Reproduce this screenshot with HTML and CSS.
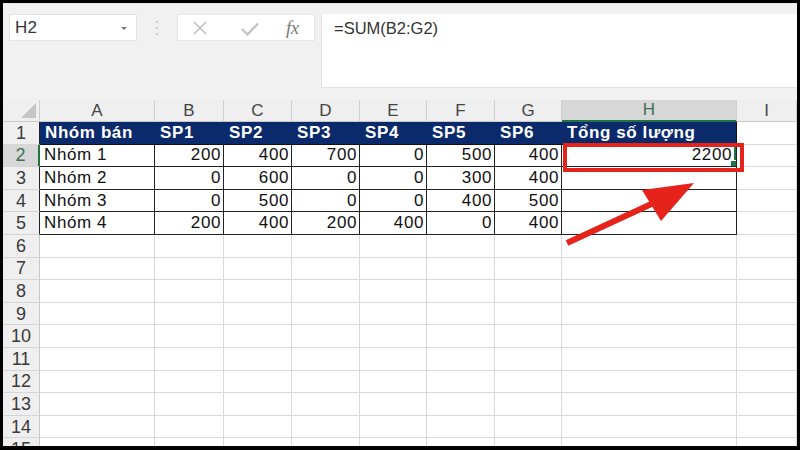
FILE: index.html
```html
<!DOCTYPE html>
<html lang="vi">
<head>
<meta charset="utf-8">
<title>Excel SUM</title>
<link rel="stylesheet" href="styles.css">
</head>
<body>
<div class="frame">
  <div class="toolbar">
    <div class="namebox"><span>H2</span><span class="caret"></span></div>
    <div class="dots"><i></i><i></i><i></i></div>
    <div class="btns">
      <svg class="ic-x" width="14" height="14" viewBox="0 0 14 14"><path d="M1 1L13 13M13 1L1 13" stroke="#b8b8b8" stroke-width="1.4" fill="none"/></svg>
      <svg class="ic-ok" width="18" height="14" viewBox="0 0 18 14"><path d="M1 7L6.5 12.5L17 1.5" stroke="#c4c4c4" stroke-width="2.4" fill="none"/></svg>
      <span class="fx">fx</span>
    </div>
    <div class="formula">=SUM(B2:G2)</div>
  </div>

  <div class="sheet">
    <div class="ch corner"><span class="tri"></span></div>
    <div class="ch">A</div><div class="ch">B</div><div class="ch">C</div><div class="ch">D</div><div class="ch">E</div><div class="ch">F</div><div class="ch">G</div><div class="ch sel">H</div><div class="ch">I</div>

    <div class="rh tb">1</div>
    <div class="c hd">Nhóm bán</div><div class="c hd">SP1</div><div class="c hd">SP2</div><div class="c hd">SP3</div><div class="c hd">SP4</div><div class="c hd">SP5</div><div class="c hd">SP6</div><div class="c hd last">Tổng số lượng</div><div class="c"></div>

    <div class="rh selr">2</div>
    <div class="c d">Nhóm 1</div><div class="c d n">200</div><div class="c d n">400</div><div class="c d n">700</div><div class="c d n">0</div><div class="c d n">500</div><div class="c d n">400</div><div class="c d n active">2200<span class="handle"></span></div><div class="c"></div>

    <div class="rh tb">3</div>
    <div class="c d">Nhóm 2</div><div class="c d n">0</div><div class="c d n">600</div><div class="c d n">0</div><div class="c d n">0</div><div class="c d n">300</div><div class="c d n">400</div><div class="c d n"></div><div class="c"></div>

    <div class="rh tb">4</div>
    <div class="c d">Nhóm 3</div><div class="c d n">0</div><div class="c d n">500</div><div class="c d n">0</div><div class="c d n">0</div><div class="c d n">400</div><div class="c d n">500</div><div class="c d n"></div><div class="c"></div>

    <div class="rh tb">5</div>
    <div class="c d">Nhóm 4</div><div class="c d n">200</div><div class="c d n">400</div><div class="c d n">200</div><div class="c d n">400</div><div class="c d n">0</div><div class="c d n">400</div><div class="c d n"></div><div class="c"></div>

    <div class="rh">6</div><div class="c"></div><div class="c"></div><div class="c"></div><div class="c"></div><div class="c"></div><div class="c"></div><div class="c"></div><div class="c"></div><div class="c"></div>
    <div class="rh">7</div><div class="c"></div><div class="c"></div><div class="c"></div><div class="c"></div><div class="c"></div><div class="c"></div><div class="c"></div><div class="c"></div><div class="c"></div>
    <div class="rh">8</div><div class="c"></div><div class="c"></div><div class="c"></div><div class="c"></div><div class="c"></div><div class="c"></div><div class="c"></div><div class="c"></div><div class="c"></div>
    <div class="rh">9</div><div class="c"></div><div class="c"></div><div class="c"></div><div class="c"></div><div class="c"></div><div class="c"></div><div class="c"></div><div class="c"></div><div class="c"></div>
    <div class="rh">10</div><div class="c"></div><div class="c"></div><div class="c"></div><div class="c"></div><div class="c"></div><div class="c"></div><div class="c"></div><div class="c"></div><div class="c"></div>
    <div class="rh">11</div><div class="c"></div><div class="c"></div><div class="c"></div><div class="c"></div><div class="c"></div><div class="c"></div><div class="c"></div><div class="c"></div><div class="c"></div>
    <div class="rh">12</div><div class="c"></div><div class="c"></div><div class="c"></div><div class="c"></div><div class="c"></div><div class="c"></div><div class="c"></div><div class="c"></div><div class="c"></div>
    <div class="rh">13</div><div class="c"></div><div class="c"></div><div class="c"></div><div class="c"></div><div class="c"></div><div class="c"></div><div class="c"></div><div class="c"></div><div class="c"></div>
    <div class="rh">14</div><div class="c"></div><div class="c"></div><div class="c"></div><div class="c"></div><div class="c"></div><div class="c"></div><div class="c"></div><div class="c"></div><div class="c"></div>
    <div class="rh">15</div><div class="c"></div><div class="c"></div><div class="c"></div><div class="c"></div><div class="c"></div><div class="c"></div><div class="c"></div><div class="c"></div><div class="c"></div>
  </div>

  <div class="redbox"></div>
  <svg class="arrow" width="794" height="443" viewBox="3 3 794 443">
    <line x1="567" y1="243" x2="660" y2="200" stroke="#e5231b" stroke-width="6" stroke-linecap="butt"/>
    <polygon points="642,190 694,183 661,221" fill="#e5231b"/>
  </svg>
</div>
</body>
</html>
```

FILE: styles.css
```css
html, body {
  margin: 0;
  padding: 0;
  background: #000;
}

.frame {
  position: relative;
  width: 794px;
  height: 443px;
  margin: 3px 3px 4px 3px;
  background: #fff;
  overflow: hidden;
  font-family: "Liberation Sans", Arial, sans-serif;
  color: #222;
}

/* ---------- toolbar ---------- */
.toolbar {
  height: 97px;
  box-sizing: border-box;
  background: #f1f1f1;
  display: flex;
  align-items: flex-start;
  padding: 10px 0 0 6px;
  border-top: 1px solid #e2e2e2;
}

.namebox {
  width: 128px;
  height: 27px;
  box-sizing: border-box;
  background: #fff;
  border: 1px solid #e4e4e4;
  display: flex;
  align-items: center;
  justify-content: space-between;
  padding: 0 9px 0 5px;
  font-size: 17px;
  letter-spacing: 0.3px;
  color: #333;
}

.caret {
  width: 0;
  height: 0;
  border-left: 3px solid transparent;
  border-right: 3px solid transparent;
  border-top: 3px solid #777;
  margin-top: 1px;
}

.dots {
  width: 40px;
  height: 27px;
  display: flex;
  flex-direction: column;
  align-items: center;
  justify-content: center;
  gap: 4px;
}

.dots i {
  display: block;
  width: 2px;
  height: 2px;
  border-radius: 1px;
  background: #bdbdbd;
}

.btns {
  width: 138px;
  height: 27px;
  box-sizing: border-box;
  background: #fff;
  border: 1px solid #e6e6e6;
  display: flex;
  align-items: center;
  padding-left: 15px;
}

.ic-x { margin-right: 34px; }
.ic-ok { margin-right: 27px; margin-top: 2px; }

.fx {
  font-family: "Liberation Serif", "Times New Roman", serif;
  font-style: italic;
  font-size: 19px;
  color: #7a7a7a;
  letter-spacing: -0.5px;
}

.formula {
  flex: 1;
  height: 74px;
  box-sizing: border-box;
  margin-left: 6px;
  background: #fff;
  border-left: 1px solid #e2e2e2;
  border-bottom: 1px solid #e2e2e2;
  padding: 5px 0 0 12px;
  font-size: 16.5px;
  line-height: 18px;
  color: #333;
}

/* ---------- sheet ---------- */
.sheet {
  display: grid;
  grid-template-columns: 37px 115px 69px 68px 68px 67px 68px 67px 175px 60px;
  grid-template-rows: 22px repeat(15, 22.6px);
  font-size: 17px;
}

.ch, .rh, .c {
  box-sizing: border-box;
  border-right: 1px solid #dadada;
  border-bottom: 1px solid #dadada;
  display: flex;
  align-items: center;
  overflow: hidden;
  white-space: nowrap;
}

.ch {
  background: #efefef;
  justify-content: center;
  color: #444;
  font-size: 17px;
  border-right-color: #d0d0d0;
  border-bottom-color: #c9c9c9;
}

.ch.corner {
  position: relative;
  justify-content: flex-end;
  align-items: flex-end;
  padding: 0 3px 3px 0;
}

.tri {
  width: 0;
  height: 0;
  border-left: 15px solid transparent;
  border-bottom: 15px solid #c4c4c4;
}

.ch.sel {
  background: #d7d7d7;
  color: #3d6f55;
  border-bottom: 2px solid #217346;
}

.rh {
  background: #efefef;
  justify-content: center;
  color: #3a3a3a;
  font-size: 18px;
  border-right-color: #c9c9c9;
  border-bottom-color: #d6d6d6;
  padding-top: 1px;
}

.rh.tb { border-right-color: #222; }

.rh.selr {
  background: #d7d7d7;
  color: #3d6f55;
  border-right: 2px solid #217346;
}

.c {
  padding: 0 4px;
  letter-spacing: 0.6px;
  color: #111;
}

.c.hd {
  background: #0b2a6b;
  color: #fff;
  font-weight: bold;
  border-right-color: #0b2a6b;
  border-bottom-color: #111;
  padding-left: 5px;
}

.c.hd.last { border-right-color: #111; }

.c.d {
  border-right-color: #222;
  border-bottom-color: #222;
}

.c.n {
  justify-content: flex-end;
  padding-right: 2px;
}

.c.active {
  position: relative;
  box-shadow: inset -2px 0 0 #217346;
  padding-right: 4px;
}

.handle {
  position: absolute;
  right: -1px;
  bottom: -1px;
  width: 5px;
  height: 5px;
  background: #217346;
  border: 1px solid #fff;
}

/* ---------- annotations ---------- */
.redbox {
  position: absolute;
  left: 560px;
  top: 140px;
  width: 181px;
  height: 29px;
  box-sizing: border-box;
  border: 4px solid #e5231b;
}

.arrow {
  position: absolute;
  left: 0;
  top: 0;
}
```
